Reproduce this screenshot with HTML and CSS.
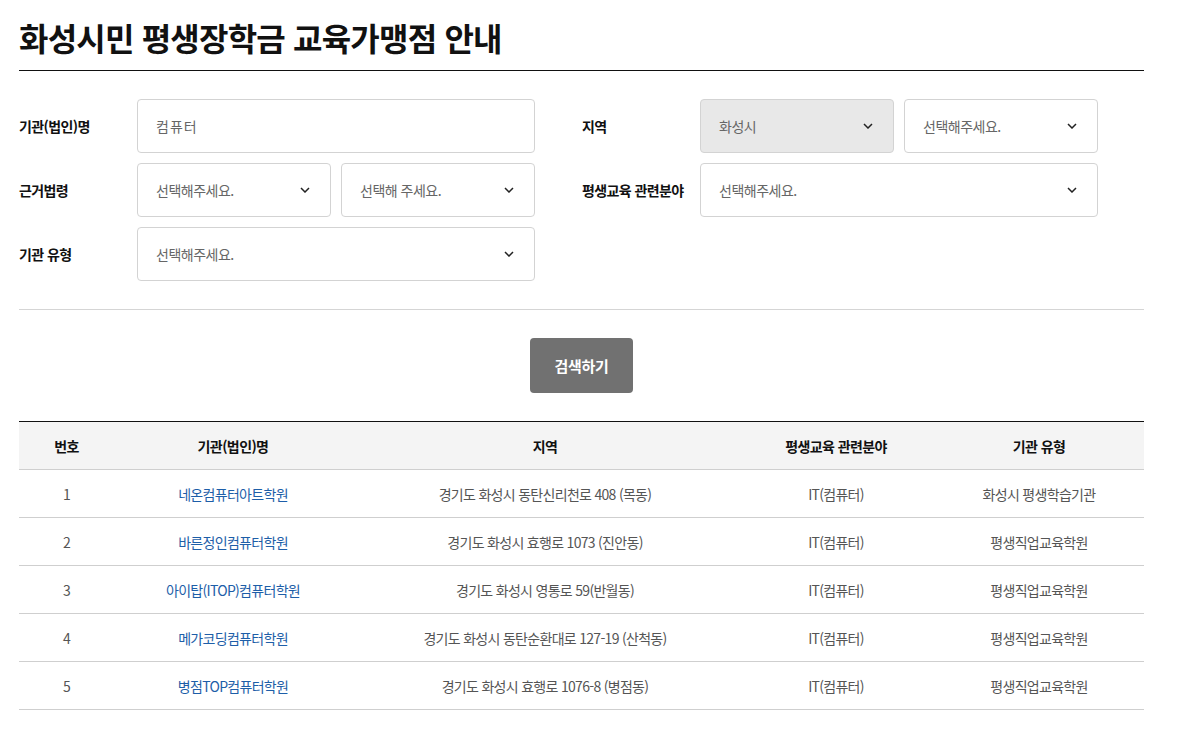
FILE: index.html
```html
<!DOCTYPE html>
<html lang="ko">
<head>
<meta charset="utf-8">
<title>화성시민 평생장학금 교육가맹점 안내</title>
<link rel="stylesheet" href="styles.css">
</head>
<body>
<div class="page">
  <h1 class="title">화성시민 평생장학금 교육가맹점 안내</h1>

  <div class="search">
    <div class="grid">
      <div class="row">
        <div class="label">기관(법인)명</div>
        <div class="fields">
          <div class="box input">컴퓨터</div>
        </div>
      </div>
      <div class="row">
        <div class="label">지역</div>
        <div class="fields">
          <div class="box select disabled"><span>화성시</span><svg class="chev" viewBox="0 0 10 6"><path d="M1 1l4 4 4-4"/></svg></div>
          <div class="box select"><span>선택해주세요.</span><svg class="chev" viewBox="0 0 10 6"><path d="M1 1l4 4 4-4"/></svg></div>
        </div>
      </div>
      <div class="row">
        <div class="label">근거법령</div>
        <div class="fields">
          <div class="box select"><span>선택해주세요.</span><svg class="chev" viewBox="0 0 10 6"><path d="M1 1l4 4 4-4"/></svg></div>
          <div class="box select"><span>선택해 주세요.</span><svg class="chev" viewBox="0 0 10 6"><path d="M1 1l4 4 4-4"/></svg></div>
        </div>
      </div>
      <div class="row">
        <div class="label">평생교육 관련분야</div>
        <div class="fields">
          <div class="box select"><span>선택해주세요.</span><svg class="chev" viewBox="0 0 10 6"><path d="M1 1l4 4 4-4"/></svg></div>
        </div>
      </div>
      <div class="row">
        <div class="label">기관 유형</div>
        <div class="fields">
          <div class="box select"><span>선택해주세요.</span><svg class="chev" viewBox="0 0 10 6"><path d="M1 1l4 4 4-4"/></svg></div>
        </div>
      </div>
    </div>
  </div>

  <div class="actions">
    <button class="btn" type="button">검색하기</button>
  </div>

  <table class="list">
    <colgroup>
      <col class="c1"><col class="c2"><col class="c3"><col class="c4"><col class="c5">
    </colgroup>
    <thead>
      <tr><th>번호</th><th>기관(법인)명</th><th>지역</th><th>평생교육 관련분야</th><th>기관 유형</th></tr>
    </thead>
    <tbody>
      <tr><td>1</td><td><a href="#">네온컴퓨터아트학원</a></td><td>경기도 화성시 동탄신리천로 408 (목동)</td><td>IT(컴퓨터)</td><td>화성시 평생학습기관</td></tr>
      <tr><td>2</td><td><a href="#">바른정인컴퓨터학원</a></td><td>경기도 화성시 효행로 1073 (진안동)</td><td>IT(컴퓨터)</td><td>평생직업교육학원</td></tr>
      <tr><td>3</td><td><a href="#">아이탑(ITOP)컴퓨터학원</a></td><td>경기도 화성시 영통로 59(반월동)</td><td>IT(컴퓨터)</td><td>평생직업교육학원</td></tr>
      <tr><td>4</td><td><a href="#">메가코딩컴퓨터학원</a></td><td>경기도 화성시 동탄순환대로 127-19 (산척동)</td><td>IT(컴퓨터)</td><td>평생직업교육학원</td></tr>
      <tr><td>5</td><td><a href="#">병점TOP컴퓨터학원</a></td><td>경기도 화성시 효행로 1076-8 (병점동)</td><td>IT(컴퓨터)</td><td>평생직업교육학원</td></tr>
    </tbody>
  </table>
</div>
</body>
</html>
```

FILE: styles.css
```css
* { box-sizing: border-box; }
html, body { margin: 0; padding: 0; background: #fff; }
body {
  font-family: "Noto Sans CJK KR", "Noto Sans", sans-serif;
  color: #222;
  font-size: 14px;
}
.page {
  width: 1125px;
  margin-left: 19px;
}
.title {
  margin: 0;
  padding-top: 17px;
  height: 71px;
  font-size: 32px;
  line-height: 40px;
  font-weight: 700;
  letter-spacing: -0.8px;
  color: #111;
  border-bottom: 1px solid #111;
}
.search {
  padding: 28px 0 28px;
  border-bottom: 1px solid #d5d5d5;
}
.grid {
  display: grid;
  grid-template-columns: 563px 562px;
  row-gap: 10px;
}
.row {
  display: flex;
  align-items: center;
}
.label {
  width: 118px;
  flex: none;
  font-weight: 700;
  font-size: 14px;
  letter-spacing: -0.6px;
  color: #111;
}
.fields {
  width: 398px;
  display: flex;
  gap: 10px;
}
.box {
  flex: 1;
  height: 54px;
  border: 1px solid #d3d3d3;
  border-radius: 4px;
  background: #fff;
  display: flex;
  align-items: center;
  padding: 0 20px 0 18px;
  color: #666;
  font-size: 14px;
  letter-spacing: -0.5px;
}
.input { letter-spacing: 1px; }
.select { justify-content: space-between; }
.disabled { background: #e8e8e8; }
.chev {
  width: 10px;
  height: 6px;
  fill: none;
  stroke: #222;
  stroke-width: 1.5;
}
.actions {
  display: flex;
  justify-content: center;
  padding: 28px 0 28px;
}
.btn {
  width: 103px;
  height: 55px;
  border: 0;
  border-radius: 4px;
  background: #717171;
  color: #fff;
  font-family: inherit;
  font-weight: 700;
  font-size: 15px;
  letter-spacing: -0.3px;
}
.list {
  width: 1125px;
  border-collapse: collapse;
  border-top: 1px solid #111;
  table-layout: fixed;
}
.c1 { width: 95px; }
.c2 { width: 238px; }
.c3 { width: 386px; }
.c4 { width: 196px; }
.c5 { width: 210px; }
.list th {
  height: 48px;
  background: #f4f4f4;
  font-weight: 700;
  font-size: 14px;
  color: #111;
  letter-spacing: -0.6px;
  border-bottom: 1px solid #cfcfcf;
  padding: 0;
}
.list td {
  height: 48px;
  text-align: center;
  color: #555;
  font-size: 14px;
  letter-spacing: -0.7px;
  border-bottom: 1px solid #cfcfcf;
  padding: 0;
}
.list td a {
  color: #1d5ea8;
  text-decoration: none;
}
```
